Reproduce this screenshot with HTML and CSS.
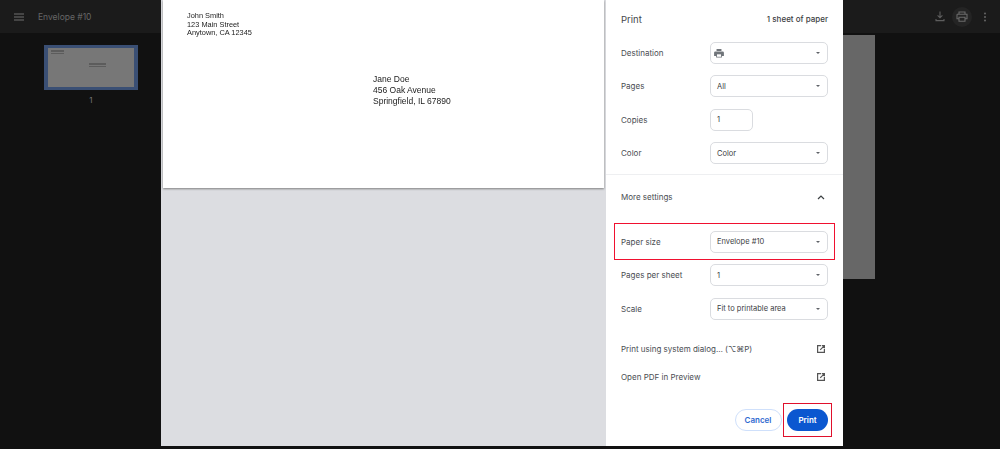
FILE: index.html
```html
<!DOCTYPE html>
<html lang="en">
<head>
<meta charset="utf-8">
<title>Envelope #10</title>
<link rel="stylesheet" href="styles.css">
</head>
<body>
<div class="viewer">
  <header class="toolbar">
    <div class="toolbar-left">
      <svg class="menu-icon" viewBox="0 0 10 8" width="10" height="8"><path d="M0 1h10M0 4h10M0 7h10" stroke="#707070" stroke-width="1"/></svg>
      <span class="doc-title">Envelope #10</span>
    </div>
    <div class="toolbar-right">
      <svg class="tool-icon" viewBox="0 0 10 11" width="10" height="11"><path d="M5 0.5v6M2.6 4.4 5 6.8l2.4-2.4M1 8v1.6h8V8" fill="none" stroke="#5e5e5e" stroke-width="1.1"/></svg>
      <span class="print-round">
        <svg viewBox="0 0 12 11" width="12" height="11"><path d="M3 3V1h6v2M1 3.2h10v4.6H9M3 7.8H1V3.2M3 6.2h6v4H3z" fill="none" stroke="#6a6a6a" stroke-width="1.1"/></svg>
      </span>
      <svg class="tool-icon" viewBox="0 0 4 10" width="4" height="10"><circle cx="2" cy="1.5" r="1" fill="#666"/><circle cx="2" cy="5" r="1" fill="#666"/><circle cx="2" cy="8.5" r="1" fill="#666"/></svg>
    </div>
  </header>
  <div class="workspace">
    <aside class="thumbs">
      <div class="thumb">
        <div class="thumb-page">
          <div class="thumb-from"><i></i><i></i><i></i></div>
          <div class="thumb-to"><i></i><i></i><i></i></div>
        </div>
      </div>
      <span class="thumb-num">1</span>
    </aside>
    <div class="back-page"></div>
  </div>
</div>

<div class="dialog">
  <section class="preview">
    <div class="envelope">
      <div class="from">John Smith<br>123 Main Street<br>Anytown, CA 12345</div>
      <div class="to">Jane Doe<br>456 Oak Avenue<br>Springfield, IL 67890</div>
    </div>
  </section>
  <section class="panel">
    <div class="panel-head">
      <h1>Print</h1>
      <span class="sheets">1 sheet of paper</span>
    </div>
    <div class="row"><span>Destination</span>
      <div class="select">
        <svg class="dest-icon" viewBox="0 0 12 11" width="10" height="9"><path d="M3 0h6v2.500H3zM1.500 3h9A1.500 1.500 0 0 1 12 4.500V8.500H9.500V10.500h-7V8.500H0V4.500A1.500 1.500 0 0 1 1.500 3z" fill="#70757a"/><path d="M3.500 6.500h5v3h-5z" fill="#fff"/></svg>
        <b class="caret"></b>
      </div>
    </div>
    <div class="row"><span>Pages</span><div class="select">All<b class="caret"></b></div></div>
    <div class="row"><span>Copies</span><div class="select copies">1</div></div>
    <div class="row"><span>Color</span><div class="select">Color<b class="caret"></b></div></div>
    <div class="divider"></div>
    <div class="more">
      <span>More settings</span>
      <svg viewBox="0 0 8 5" width="8" height="5"><path d="M1 4 4 1l3 3" fill="none" stroke="#3c4043" stroke-width="1.2"/></svg>
    </div>
    <div class="row marked"><span>Paper size</span><div class="select">Envelope #10<b class="caret"></b></div></div>
    <div class="row"><span>Pages per sheet</span><div class="select">1<b class="caret"></b></div></div>
    <div class="row"><span>Scale</span><div class="select">Fit to printable area<b class="caret"></b></div></div>
    <div class="link first"><span>Print using system dialog… (⌥⌘P)</span>
      <svg viewBox="0 0 8 8" width="8" height="8"><path d="M4 .6H.6v6.800h6.800V4M3.200 4.800 7.400.6M4.800.6h2.600v2.600" fill="none" stroke="#555" stroke-width="1.2"/></svg>
    </div>
    <div class="link"><span>Open PDF in Preview</span>
      <svg viewBox="0 0 8 8" width="8" height="8"><path d="M4 .6H.6v6.800h6.800V4M3.200 4.800 7.400.6M4.800.6h2.600v2.600" fill="none" stroke="#555" stroke-width="1.2"/></svg>
    </div>
    <div class="actions">
      <button class="btn cancel">Cancel</button>
      <div class="print-mark"><button class="btn print">Print</button></div>
    </div>
  </section>
</div>
</body>
</html>
```
FILE: styles.css
```css
* { box-sizing: border-box; }
html, body { margin: 0; height: 100%; overflow: hidden; }
body { background: #111; font-family: Inter, "Liberation Sans", sans-serif; }

.viewer { height: 449px; display: flex; flex-direction: column; }
.toolbar {
  height: 33px;
  background: #1b1b1b;
  display: flex;
  justify-content: space-between;
  align-items: center;
  padding: 0 13px 0 14px;
}
.toolbar-left { display: flex; align-items: center; gap: 14px; }
.doc-title { color: #666; font-size: 8.5px; font-weight: 400; }
.toolbar-right { display: flex; align-items: center; }
.print-round {
  width: 20px; height: 20px;
  margin: 0 11px 0 7px;
  border-radius: 50%;
  background: #242424;
  display: flex; align-items: center; justify-content: center;
}
.workspace { flex: 1; position: relative; padding: 12px 0 0 44px; }
.thumbs { width: 94px; display: flex; flex-direction: column; align-items: center; }
.thumb { width: 94px; height: 45px; background: #3a4f74; padding: 3px 4px; }
.thumb-page { height: 100%; background: #777; position: relative; }
.thumb-from, .thumb-to { position: absolute; display: flex; flex-direction: column; gap: 0.7px; }
.thumb-from { left: 3px; top: 2px; width: 13px; }
.thumb-to { left: 41px; top: 15px; width: 17px; }
.thumb-from i, .thumb-to i { display: block; height: 0.8px; background: #5c5c5c; }
.thumb-num { margin-top: 4px; color: #777; font-size: 8px; line-height: 12px; }
.back-page {
  position: absolute;
  left: 843px; top: 2px;
  width: 32px; height: 244px;
  background: #676767;
}

.dialog {
  position: absolute;
  left: 161px; top: 0;
  width: 682px; height: 446px;
  display: flex;
}
.preview { width: 445px; background: #dcdde1; padding: 0 2px; }
.envelope {
  height: 188px;
  background: #fff;
  box-shadow: 0 1px 2px #808080;
  display: flex;
  flex-direction: column;
  font-family: "Liberation Sans", Arial, sans-serif;
  color: #222;
  padding: 12px 0 0 24px;
}
.from, .to { will-change: transform; }
.from { font-size: 7.4px; line-height: 8.7px; }
.to { font-size: 8.5px; line-height: 11px; margin: 36px 0 0 185.5px; }

.panel {
  width: 237px;
  background: #fff;
  padding: 0 15px;
  color: #4a4d52;
  font-size: 8px;
}
.panel-head {
  height: 36.4px;
  display: flex;
  justify-content: space-between;
  align-items: center;
  padding-top: 2px;
}
.panel-head h1 { margin: 0; font-size: 9.5px; font-weight: 400; color: #44474b; }
.sheets { font-size: 8px; font-weight: 500; color: #3c4043; }
.row {
  height: 33.4px;
  display: flex;
  align-items: center;
  position: relative;
}
.row > span { width: 89px; flex: none; }
.select {
  width: 118px;
  height: 22px;
  border: 1px solid #dadce0;
  border-radius: 5px;
  padding: 0 6px;
  display: flex;
  align-items: center;
  color: #3c4043;
  font-size: 7.5px;
  font-weight: 400;
  position: relative;
}
.select.copies { width: 43px; }
.dest-icon { margin-left: -3px; }
.caret {
  position: absolute;
  right: 7px; top: 9px;
  border: 2px solid transparent;
  border-top: 2.5px solid #5f6368;
  border-bottom: 0;
}
.divider { height: 1px; background: #eeeff1; margin: 3.6px -15px 0; }
.more {
  height: 45px;
  margin-bottom: 5.6px;
  display: flex;
  justify-content: space-between;
  align-items: center;
  padding-right: 3px;
}
.marked::after {
  content: "";
  position: absolute;
  inset: -2.3px -7.4px -1.6px -7px;
  border: 1px solid #f0102f;
  pointer-events: none;
}
.link {
  height: 28.5px;
  display: flex;
  justify-content: space-between;
  align-items: center;
  padding-right: 3px;
}
.link.first { margin-top: 9.4px; }
.actions {
  display: flex;
  justify-content: flex-end;
  gap: 5.5px;
  margin-top: 17px;
}
.btn {
  display: block;
  height: 22px;
  border-radius: 11px;
  font: 600 8px Inter, "Liberation Sans", sans-serif;
  padding: 0;
}
.cancel { width: 47px; background: #fff; color: #2f6ad0; border: 1px solid #cfe0fb; }
.print { width: 41px; background: #0b57d0; color: #fff; border: 0; }
.print-mark { position: relative; }
.print-mark::after {
  content: "";
  position: absolute;
  inset: -6px -3.5px -6.7px -4px;
  border: 1px solid #e0102c;
  pointer-events: none;
}
```
